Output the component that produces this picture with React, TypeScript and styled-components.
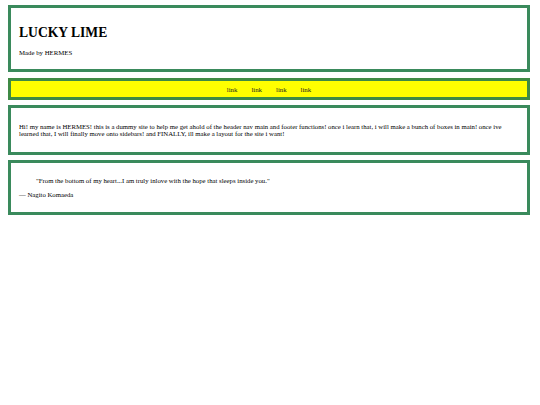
import React from "react";
import styled, { createGlobalStyle } from "styled-components";

const GlobalStyle = createGlobalStyle`
  html, body {
    margin: 0;
    padding: 0;
    background: #fff;
    font-family: "Liberation Serif", "Times New Roman", serif;
    color: #000;
  }
`;

const Page = styled.div`
  display: flex;
  flex-direction: column;
  gap: 5px;
  padding: 5px 10px 0 8px;
`;

const Box = styled.section<{ $bg?: string }>`
  border: 3px solid #3a8a5c;
  background: ${(p) => p.$bg || "#fff"};
  padding: 0 8px;
  box-sizing: content-box;
`;

const Header = styled(Box)`
  height: 44px;
  padding-top: 17px;

  h1 {
    margin: 0;
    font-size: 13.6px;
    line-height: 15px;
    font-weight: 700;
  }
  p {
    margin: 9px 0 0;
    font-size: 6.8px;
    line-height: 8px;
  }
`;

const Nav = styled(Box)`
  height: 16px;
  margin-top: 1px;
  display: flex;
  justify-content: center;
  align-items: center;
  gap: 14px;
  border-color: #3f8a45;

  a {
    font-size: 6.8px;
    color: #222;
    text-decoration: none;
  }
`;

const Main = styled(Box)`
  height: 44px;
  display: flex;
  align-items: center;

  p {
    margin: 0;
    font-size: 6.75px;
    line-height: 7.5px;
  }
`;

const Footer = styled(Box)`
  height: 49px;
  display: flex;
  flex-direction: column;
  justify-content: center;

  blockquote {
    margin: 0 0 0 17px;
    font-size: 6.75px;
    line-height: 8px;
  }
  p {
    margin: 6px 0 0;
    font-size: 6.75px;
    line-height: 8px;
  }
`;

const App: React.FC = () => {
  return (
    <>
      <GlobalStyle />
      <Page>
        <Header>
          <h1>LUCKY LIME</h1>
          <p>Made by HERMES</p>
        </Header>
        <Nav $bg="#ffff00">
          <a href="#">link</a>
          <a href="#">link</a>
          <a href="#">link</a>
          <a href="#">link</a>
        </Nav>
        <Main>
          <p>
            Hi! my name is HERMES! this is a dummy site to help me get ahold of the header nav main and footer
            functions! once i learn that, i will make a bunch of boxes in main! once ive learned that, I will
            finally move onto sidebars! and FINALLY, ill make a layout for the site i want!
          </p>
        </Main>
        <Footer>
          <blockquote>"From the bottom of my heart...I am truly inlove with the hope that sleeps inside you."</blockquote>
          <p>— Nagito Komaeda</p>
        </Footer>
      </Page>
    </>
  );
};

export default App;
